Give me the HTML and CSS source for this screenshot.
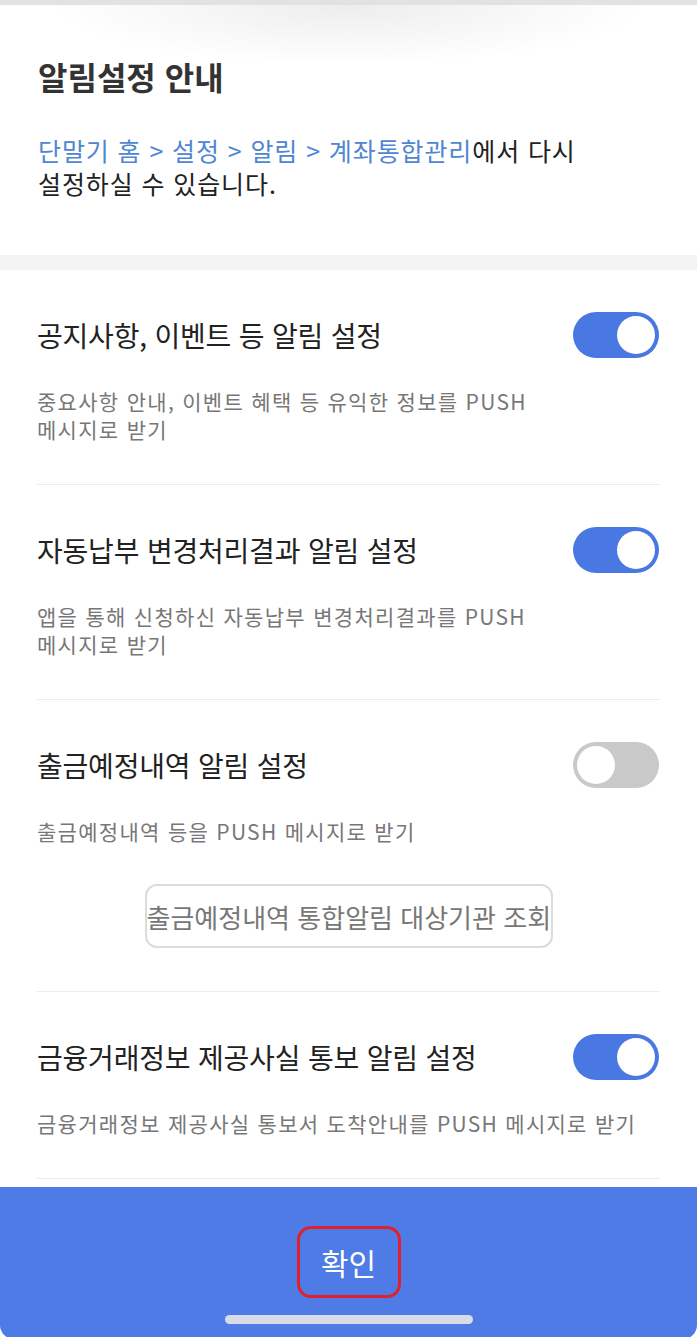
FILE: index.html
```html
<!DOCTYPE html>
<html lang="ko">
<head>
  <meta charset="UTF-8" />
  <meta name="viewport" content="width=device-width, initial-scale=1.0" />
  <title>알림설정</title>
  <link rel="stylesheet" href="styles.css">
</head>
<body>
  <div class="topbar"></div>

  <section class="notice">
    <h1 class="notice-title">알림설정 안내</h1>
    <p class="notice-text"><span class="path">단말기 홈 &gt; 설정 &gt; 알림 &gt; 계좌통합관리</span>에서 다시<br />설정하실 수 있습니다.</p>
  </section>

  <div class="band"></div>

  <ul class="list">
    <li class="item">
      <div class="row">
        <span class="item-title">공지사항, 이벤트 등 알림 설정</span>
        <span class="toggle on"><span class="knob"></span></span>
      </div>
      <p class="item-desc">중요사항 안내, 이벤트 혜택 등 유익한 정보를 PUSH<br />메시지로 받기</p>
    </li>
    <li class="item">
      <div class="row">
        <span class="item-title">자동납부 변경처리결과 알림 설정</span>
        <span class="toggle on"><span class="knob"></span></span>
      </div>
      <p class="item-desc">앱을 통해 신청하신 자동납부 변경처리결과를 PUSH<br />메시지로 받기</p>
    </li>
    <li class="item">
      <div class="row">
        <span class="item-title">출금예정내역 알림 설정</span>
        <span class="toggle"><span class="knob"></span></span>
      </div>
      <p class="item-desc">출금예정내역 등을 PUSH 메시지로 받기</p>
      <div class="btn-wrap">
        <button class="sub-btn">출금예정내역 통합알림 대상기관 조회</button>
      </div>
    </li>
    <li class="item">
      <div class="row">
        <span class="item-title">금융거래정보 제공사실 통보 알림 설정</span>
        <span class="toggle on"><span class="knob"></span></span>
      </div>
      <p class="item-desc">금융거래정보 제공사실 통보서 도착안내를 PUSH 메시지로 받기</p>
    </li>
  </ul>

  <footer class="footer">
    <button class="confirm">확인</button>
    <div class="home-bar"></div>
  </footer>
</body>
</html>
```

FILE: styles.css
```css
body {
  margin: 0;
  padding: 0;
  background: #fff;
  color: #222;
  font-family: "Noto Sans CJK KR", "Noto Sans", sans-serif;
}

.topbar {
  height: 5px;
  background: #e2e2e2;
}

.notice {
  padding: 49px 38px 55px;
  background: radial-gradient(ellipse 300px 60px at 50% 0, rgba(0, 0, 0, 0.07), rgba(0, 0, 0, 0));
}

.notice-title {
  margin: 0;
  font-size: 32px;
  line-height: 44px;
  font-weight: 700;
  color: #333;
}

.notice-text {
  margin: 36px 0 0;
  font-size: 25px;
  line-height: 33px;
  color: #222;
  letter-spacing: 0.9px;
}

.path {
  color: #4f86d3;
}

.band {
  height: 15px;
  background: #f3f3f3;
}

.list {
  list-style: none;
  margin: 0;
  padding: 0 37px;
}

.item {
  padding: 42px 0 41px;
  border-bottom: 1px solid #ececec;
}

.row {
  display: flex;
  align-items: center;
  justify-content: space-between;
  height: 46px;
}

.item-title {
  font-size: 28px;
  color: #222;
  letter-spacing: -0.2px;
}

.toggle {
  display: flex;
  align-items: center;
  justify-content: flex-start;
  width: 86px;
  height: 46px;
  padding: 0 4px;
  box-sizing: border-box;
  border-radius: 23px;
  background: #c9c9c9;
  margin-right: 1px;
  flex-shrink: 0;
}

.toggle.on {
  justify-content: flex-end;
  background: #4a78e2;
}

.knob {
  width: 38px;
  height: 38px;
  border-radius: 50%;
  background: #fff;
}

.item-desc {
  margin: 29px 0 0;
  font-size: 21px;
  line-height: 28px;
  color: #777;
  letter-spacing: 1.3px;
}

.btn-wrap {
  display: flex;
  justify-content: center;
  margin-top: 39px;
  margin-bottom: 2px;
}

.sub-btn {
  width: 408px;
  height: 64px;
  padding: 0;
  border: 2px solid #dcdcdc;
  border-radius: 12px;
  background: #fff;
  color: #777;
  font-family: inherit;
  font-size: 26px;
  white-space: nowrap;
}

.footer {
  margin-top: 8px;
  height: 152px;
  background: #4e7be6;
  display: flex;
  flex-direction: column;
  align-items: center;
  border-radius: 0 0 14px 14px;
}

.confirm {
  margin-top: 39px;
  width: 104px;
  height: 72px;
  border: 3px solid #e2202c;
  border-radius: 14px;
  background: transparent;
  color: #fff;
  font-family: inherit;
  font-size: 30px;
}

.home-bar {
  margin-top: 17px;
  width: 248px;
  height: 9px;
  border-radius: 5px;
  background: #d8dce6;
}
```
